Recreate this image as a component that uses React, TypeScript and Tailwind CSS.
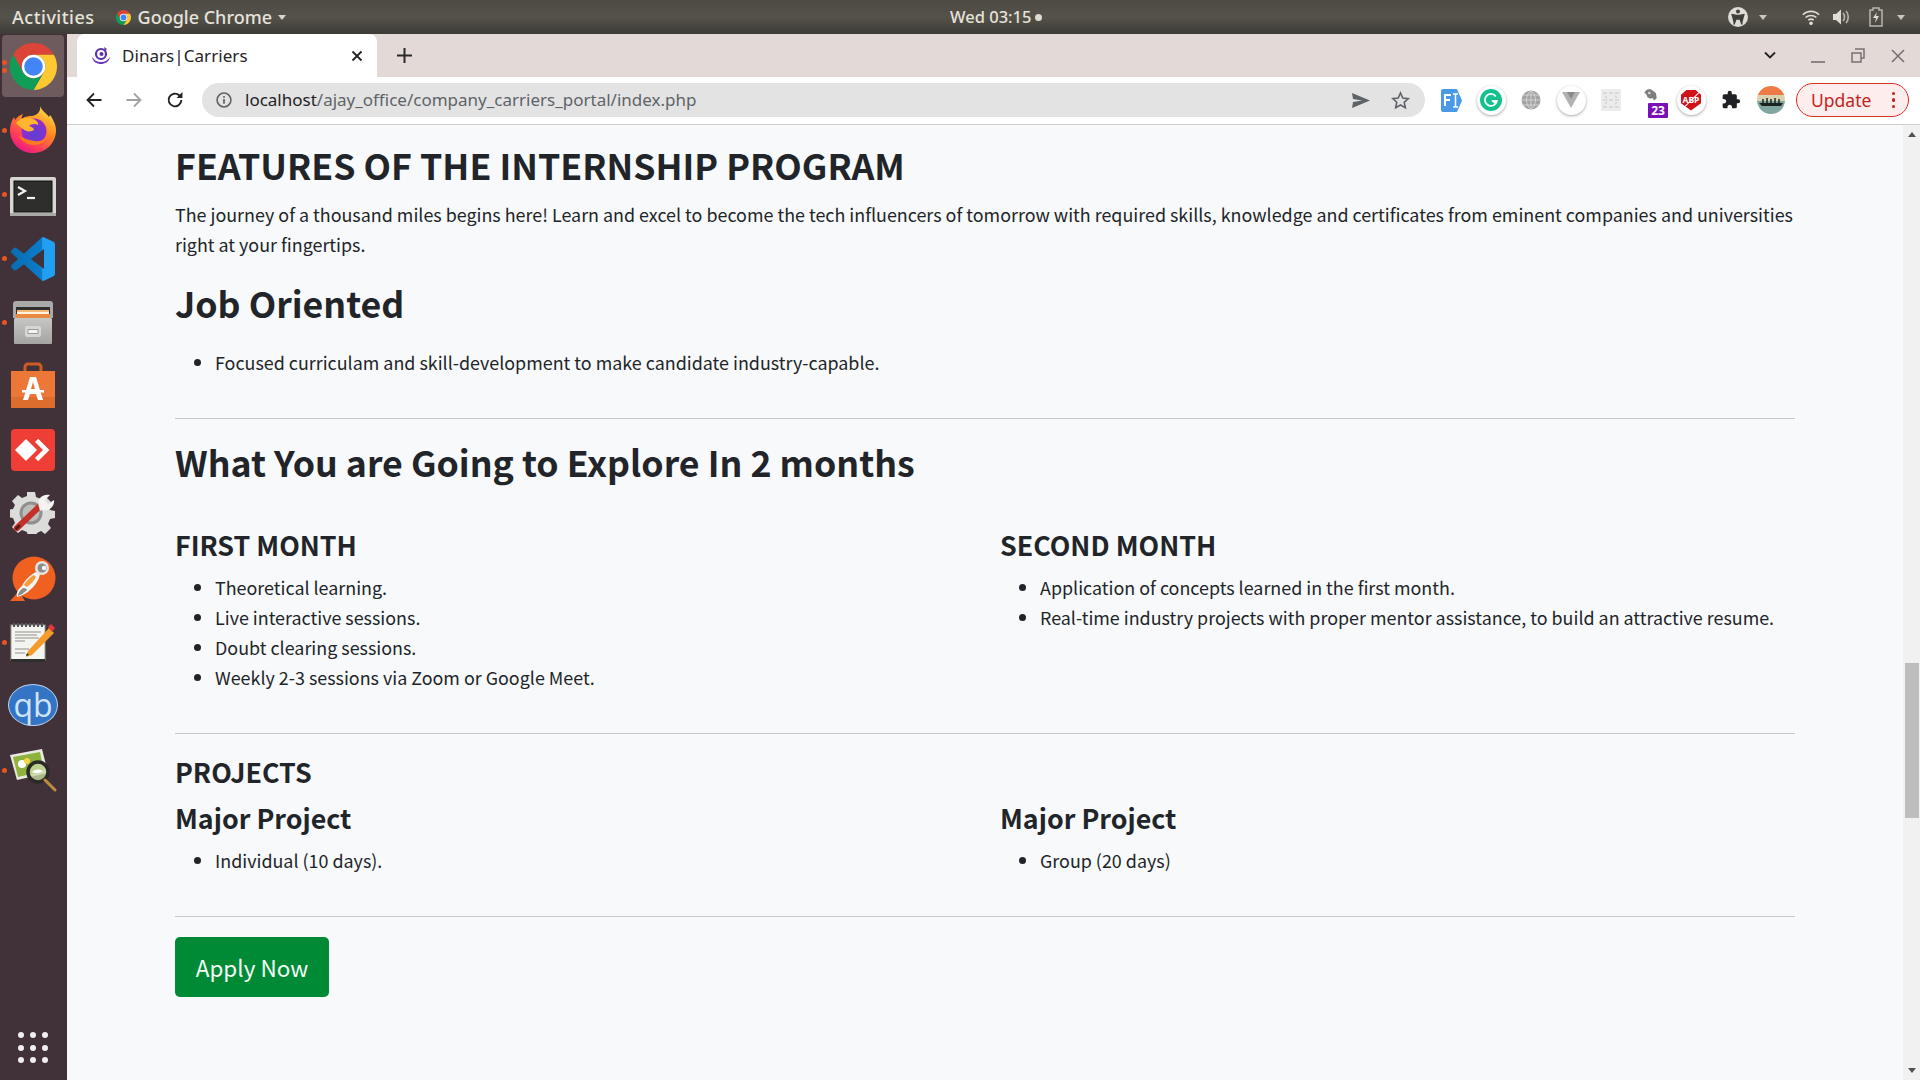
import React from "react";

const BODY = '"Noto Sans CJK SC","Source Sans Pro","Noto Sans",sans-serif';

function ChromeLogo({ size }: { size: number }) {
  return (
    <svg width={size} height={size} viewBox="0 0 48 48">
      <path fill="#db4437" d="M3.2 12A24 24 0 0 1 44.78 12H24A12 12 0 0 0 13.6 30Z" />
      <path fill="#fdc830" d="M44.78 12A24 24 0 0 1 24 48L34.4 30A12 12 0 0 0 24 12Z" />
      <path fill="#0f9d58" d="M24 48A24 24 0 0 1 3.2 12L13.6 30A12 12 0 0 0 34.4 30Z" />
      <circle cx="24" cy="24" r="12" fill="#fff" />
      <circle cx="24" cy="24" r="9.5" fill="#4285f4" />
    </svg>
  );
}

function Firefox() {
  return (
    <svg width="48" height="48" viewBox="0 0 48 48">
      <defs>
        <linearGradient id="ff1" x1="0.8" y1="0" x2="0.2" y2="1">
          <stop offset="0" stopColor="#ffe24a" />
          <stop offset="0.4" stopColor="#ff8a1f" />
          <stop offset="0.75" stopColor="#ff3a5c" />
          <stop offset="1" stopColor="#e3128c" />
        </linearGradient>
        <radialGradient id="ff2" cx="0.55" cy="0.65" r="0.6">
          <stop offset="0" stopColor="#5b3fd6" />
          <stop offset="1" stopColor="#9a2bc4" />
        </radialGradient>
      </defs>
      <path fill="url(#ff1)" d="M31 1c2 5 6 7 9 11l1-2c3 4 6 10 6 15 0 13-10 23-23 23S1 38 1 25c0-5 2-10 4-13l1 3c2-3 5-5 8-6-1 2-2 4-1 5 3-3 7-3 10-3 6-1 9-5 8-10z" />
      <circle cx="25" cy="26" r="12.5" fill="url(#ff2)" />
      <path fill="#ffb52e" d="M7 18c4-5 9-6 14-5 5 1 9 4 8 7-3-2-7-1-9 1 3 1 5 2 5 4-3 2-8 2-11-1-3-2-5-4-7-6z" />
      <path fill="#ff7a1f" d="M10 31c3 6 9 9 15 9 6 0 11-3 14-8-4 3-9 5-14 4-6-1-11-3-15-5z" />
    </svg>
  );
}

function Terminal() {
  return (
    <svg width="46" height="39" viewBox="0 0 46 39">
      <rect x="0" y="0" width="46" height="39" rx="2" fill="#d6d6d3" />
      <rect x="0" y="36" width="46" height="3" fill="#a9a9a6" />
      <rect x="4" y="4" width="38" height="31" fill="#2e2e2d" stroke="#0e0e0e" />
      <path d="M8 10l7 4-7 4" fill="none" stroke="#f2f2f2" strokeWidth="2.2" />
      <path d="M17 21h8" stroke="#f2f2f2" strokeWidth="2.2" />
    </svg>
  );
}

function VSCode() {
  return (
    <svg width="44" height="44" viewBox="0 0 24 24">
      <defs>
        <linearGradient id="vs" x1="0" x2="1" y1="0" y2="0">
          <stop offset="0" stopColor="#0a6cb0" />
          <stop offset="0.7" stopColor="#0a7ccc" />
          <stop offset="0.72" stopColor="#21a0f2" />
          <stop offset="1" stopColor="#21a0f2" />
        </linearGradient>
      </defs>
      <path fill="url(#vs)" d="M23.15 2.587L18.21.21a1.494 1.494 0 0 0-1.705.29l-9.46 8.63-4.12-3.128a.999.999 0 0 0-1.276.057L.327 7.261A1 1 0 0 0 .326 8.74L3.899 12 .326 15.26a1 1 0 0 0 .001 1.479L1.65 17.94a.999.999 0 0 0 1.276.057l4.12-3.128 9.46 8.63a1.492 1.492 0 0 0 1.704.29l4.942-2.377A1.5 1.5 0 0 0 24 20.06V3.939a1.5 1.5 0 0 0-.85-1.352zm-5.146 14.861L10.826 12l7.178-5.448v10.896z" />
    </svg>
  );
}

function Files() {
  return (
    <svg width="42" height="44" viewBox="0 0 42 44">
      <defs>
        <linearGradient id="fl" x1="0" x2="0" y1="0" y2="1">
          <stop offset="0" stopColor="#c6c6c4" />
          <stop offset="1" stopColor="#a4a4a2" />
        </linearGradient>
      </defs>
      <path fill="#a9a9a7" d="M1 4a3 3 0 0 1 3-3h34a3 3 0 0 1 3 3v14H1z" />
      <rect x="4" y="7" width="34" height="12" fill="#2f2f2e" />
      <rect x="5" y="10" width="32" height="2" fill="#f4b877" />
      <rect x="5" y="12" width="32" height="2" fill="#fff1dc" />
      <rect x="4" y="14" width="34" height="4" fill="#ea8a3e" />
      <path fill="url(#fl)" d="M3 18h36l1 1v24a1 1 0 0 1-1 1H3a1 1 0 0 1-1-1V19z" />
      <rect x="13" y="26" width="16" height="11" rx="2" fill="#d6d6d3" />
      <rect x="15.5" y="29" width="11" height="5" rx="1" fill="#9a9a98" />
      <rect x="16.5" y="30" width="9" height="3" fill="#f4f4f2" />
    </svg>
  );
}

function Store() {
  return (
    <svg width="44" height="46" viewBox="0 0 44 46">
      <path fill="none" stroke="#cf5b22" strokeWidth="3" d="M14 13V5a3 3 0 0 1 3-3h10a3 3 0 0 1 3 3v8" />
      <path fill="#ec7737" d="M0 9h44v37H0z" />
      <path fill="#dd6d2c" d="M0 35h44v11H0z" />
      <path fill="#fff" d="M19 15h6l7 23h-5l-2-6h-6l-2 6h-5zM22 20l-2 7h4z" />
      <rect x="11" y="28" width="22" height="2.5" fill="#fff" />
    </svg>
  );
}

function RedApp() {
  return (
    <svg width="46" height="46" viewBox="0 0 46 46">
      <rect x="1" y="2" width="44" height="42" rx="4" fill="#ef3e36" />
      <path fill="#fff" d="M16 12l11 11-11 11L5 23z" />
      <path fill="#fff" d="M27 15l8 8-8 8 3.2 3.2L41.4 23 30.2 11.8z" transform="translate(-2 0)" />
    </svg>
  );
}

function Settings() {
  return (
    <svg width="46" height="42" viewBox="0 0 46 42">
      <path fill="#dcdcda" d="M17 0h8l1 5 5 2 4-3 6 6-3 4 2 4 5 1v7l-5 1-2 5 3 4-6 6-4-3-4 2-1 4h-8l-1-5-5-2-4 3-6-6 3-4-2-5-5-1v-7l5-1 2-4-3-4 6-6 4 3 5-2z" />
      <circle cx="21" cy="21" r="11.5" fill="#8f8f8d" />
      <circle cx="21" cy="21" r="8.5" fill="#bdbdbb" />
      <path d="M7 36L32 12" stroke="#c4312a" strokeWidth="6" strokeLinecap="round" />
      <path d="M6.5 36.5L9 34" stroke="#5b1512" strokeWidth="3" strokeLinecap="round" />
      <path fill="#f3f3f1" d="M29 15c-3-7 3-14 11-12l-5 5 3 4 6-4c1 7-6 12-12 10l-2 1z" />
    </svg>
  );
}

function Postman() {
  return (
    <svg width="46" height="45" viewBox="0 0 46 45">
      <circle cx="24" cy="22" r="21.5" fill="#f0601f" />
      <path fill="#f0601f" d="M9 35L0 45h15z" />
      <path fill="#f4f4f2" d="M7 41c-1-4 1-8 5-11 3-6 8-11 14-14l4 2c-1 6-5 12-10 16-3 3-8 6-13 7z" />
      <path fill="#f59a3e" d="M14 29c2-4 6-8 10-10l2 2c-2 4-5 7-9 10z" />
      <path fill="#8c8c8a" d="M8 40c0-3 2-6 5-8 3 0 4 1 4 2-3 3-6 5-9 6z" />
      <circle cx="32" cy="12" r="7" fill="#e4e4e2" />
      <circle cx="32" cy="12" r="4.5" fill="#8c8c8a" />
      <circle cx="34" cy="12" r="2.2" fill="#f4f4f2" />
    </svg>
  );
}

function Notepad() {
  return (
    <svg width="46" height="40" viewBox="0 0 46 40">
      <rect x="1" y="3" width="34" height="35" fill="#f4f4f0" stroke="#9a9a96" />
      <rect x="1" y="37" width="34" height="3" fill="#2f2f2d" />
      <path d="M4 1v4M8 1v4M12 1v4M16 1v4M20 1v4M24 1v4M28 1v4M32 1v4" stroke="#555" strokeWidth="2" />
      <path d="M5 10h26M5 13h22M5 16h24M5 19h10M5 27h14M5 31h10" stroke="#8f8f8c" strokeWidth="1" />
      <path fill="#f59b2b" d="M18 29L39 6l5 5-22 22-6 2z" />
      <path fill="#e23a3a" d="M38 5l3-3 4 4-3 4z" />
      <path fill="#222" d="M17 31l-1 3 3-1z" />
    </svg>
  );
}

function Qb() {
  return (
    <div className="w-[50px] h-[42px] rounded-[50%] bg-[#3474c4] border border-[#b8d2f0] flex items-center justify-center text-[32px] leading-none text-[#cfe4fb] font-['Open_Sans',sans-serif]">
      qb
    </div>
  );
}

function Viewer() {
  return (
    <svg width="48" height="44" viewBox="0 0 48 44">
      <path fill="#e9eadf" d="M1 6L33 0l6 24-31 7z" />
      <path fill="#8fb23c" d="M4 8L31 3l4 19-26 6z" />
      <circle cx="13" cy="15" r="4" fill="#fff" />
      <circle cx="18" cy="12" r="3" fill="#f5d547" />
      <circle cx="29" cy="23" r="10" fill="#c5d7a0" fillOpacity="0.8" stroke="#2a2a28" strokeWidth="3.5" />
      <path d="M23 23c3-3 8-3 11-1-2 2-8 3-11 1z" fill="#fff" />
      <path d="M36 31l10 10" stroke="#c18a3f" strokeWidth="3" strokeLinecap="round" />
    </svg>
  );
}

const dock: { icon: React.ReactNode; dots: number; active?: boolean; nudge: string }[] = [
  { icon: <ChromeLogo size={47} />, dots: 2, active: true, nudge: "-translate-y-[1px]" },
  { icon: <Firefox />, dots: 1, nudge: "-translate-y-[2px]" },
  { icon: <Terminal />, dots: 1, nudge: "translate-y-[1px]" },
  { icon: <VSCode />, dots: 1, nudge: "" },
  { icon: <Files />, dots: 1, nudge: "-translate-y-[1px]" },
  { icon: <Store />, dots: 0, nudge: "-translate-y-[2px]" },
  { icon: <RedApp />, dots: 0, nudge: "-translate-y-[1px]" },
  { icon: <Settings />, dots: 0, nudge: "-translate-y-[2px]" },
  { icon: <Postman />, dots: 0, nudge: "-translate-y-[1px]" },
  { icon: <Notepad />, dots: 1, nudge: "-translate-y-[1px]" },
  { icon: <Qb />, dots: 0, nudge: "-translate-y-[2px]" },
  { icon: <Viewer />, dots: 1, nudge: "" },
];

function Dock() {
  return (
    <aside className="w-[67px] shrink-0 bg-[#41323a] flex flex-col pt-[1px] relative">
      {dock.map((d, i) => (
        <div key={i} className="h-[64px] shrink-0 flex items-center justify-center relative">
          {d.active && <div className="absolute left-[2px] top-0 w-[62px] h-[62px] rounded-[4px] bg-[#6e5b5d]" />}
          {d.dots > 0 && (
            <div className="absolute left-[2px] top-0 bottom-[2px] flex flex-col justify-center gap-[3px]">
              {Array.from({ length: d.dots }).map((_, k) => (
                <span key={k} className="block w-[5px] h-[5px] rounded-full bg-[#e95420]" />
              ))}
            </div>
          )}
          <div className={`relative flex items-center justify-center -ml-[1px] ${d.nudge}`}>{d.icon}</div>
        </div>
      ))}
      <div className="mt-auto mb-[17px] ml-[18px] grid grid-cols-3 gap-[6.5px] w-[30px]">
        {Array.from({ length: 9 }).map((_, i) => (
          <span key={i} className="block w-[6px] h-[6px] rounded-full bg-[#f0eeee]" />
        ))}
      </div>
    </aside>
  );
}

function Caret({ cls }: { cls: string }) {
  return <span className={`block w-0 h-0 border-l-[4.5px] border-r-[4.5px] border-t-[5px] border-l-transparent border-r-transparent ${cls}`} />;
}

function TopBar() {
  return (
    <header className="h-[34px] shrink-0 bg-gradient-to-b from-[#4c4a43] via-[#55524a] to-[#3c3b35] flex items-center text-[#e6e3dc] font-['Noto_Sans',sans-serif] font-medium text-[18px] relative">
      <span className="ml-[12px] tracking-[0.5px]">Activities</span>
      <span className="ml-[21px]"><ChromeLogo size={15} /></span>
      <span className="ml-[7px]">Google Chrome</span>
      <span className="ml-[6px]"><Caret cls="border-t-[#d8d5cf]" /></span>
      <div className="absolute left-[950px] top-0 h-full flex items-center gap-[4px] text-[16.5px]">
        <span>Wed 03:15</span>
        <span className="block w-[7px] h-[7px] rounded-full bg-[#dedbd5]" />
      </div>
      <div className="ml-auto flex items-center">
        <svg width="20" height="20" viewBox="0 0 20 20">
          <circle cx="10" cy="10" r="10" fill="#dfdcd6" />
          <circle cx="10" cy="4.6" r="2" fill="#3f3e38" />
          <path d="M3.5 7.5L8 8.4V12l-2 5.5M16.5 7.5L12 8.4V12l2 5.5M8 8.4h4V12H8z" fill="#3f3e38" stroke="#3f3e38" strokeWidth="1.4" />
        </svg>
        <span className="ml-[11px]"><Caret cls="border-t-[#c9c6c0]" /></span>
        <svg className="ml-[35px]" width="18" height="17" viewBox="0 0 20 18">
          <path d="M1 6c5-5 13-5 18 0M4 9c3.5-3 8.5-3 12 0M7 12c2-1.5 4-1.5 6 0" fill="none" stroke="#dfdcd6" strokeWidth="1.8" />
          <circle cx="10" cy="15.5" r="2" fill="#dfdcd6" />
        </svg>
        <svg className="ml-[12px]" width="19" height="18" viewBox="0 0 19 18">
          <path d="M1 6h3l5-4.5v15L4 12H1z" fill="#dfdcd6" />
          <path d="M11 5c2 2 2 6 0 8M14 3c3 3 3 9 0 12" fill="none" stroke="#b8b5af" strokeWidth="1.6" />
        </svg>
        <svg className="ml-[18px]" width="14" height="20" viewBox="0 0 14 20">
          <path d="M4 1h6v2h3v16H1V3h3z" fill="none" stroke="#b8b5af" strokeWidth="1.5" />
          <path d="M8 5L4 11h3l-1 5 4-7H7z" fill="#dfdcd6" />
        </svg>
        <span className="ml-[14px] mr-[15px]"><Caret cls="border-t-[#c9c6c0]" /></span>
      </div>
    </header>
  );
}

function Favicon() {
  return (
    <svg width="20" height="20" viewBox="0 0 20 20">
      <circle cx="10" cy="8" r="5" fill="none" stroke="#5b33a8" strokeWidth="2.2" />
      <circle cx="10.5" cy="8" r="2" fill="#5b33a8" />
      <path d="M1 11c1 5 5 7 9 7s8-2 9-7c-2 3-5 5-9 5s-7-2-9-5z" fill="#6a3ab8" />
      <path d="M13 1l3 2-2 2z" fill="#5b33a8" />
    </svg>
  );
}

function TabStrip() {
  return (
    <div className="h-[43px] shrink-0 bg-[#e3dad8] flex items-end pl-[10px] relative">
      <div className="w-[300px] h-[43px] bg-white rounded-t-[8px] flex items-center font-['Noto_Sans',sans-serif] text-[17px] text-[#1f2328]">
        <span className="ml-[14px] shrink-0"><Favicon /></span>
        <span className="ml-[11px] tracking-[0.05px]">Dinars|Carriers</span>
        <svg className="ml-auto mr-[14px]" width="12" height="12" viewBox="0 0 12 12">
          <path d="M1.5 1.5l9 9M10.5 1.5l-9 9" stroke="#222" strokeWidth="1.8" />
        </svg>
      </div>
      <svg className="ml-[20px] mb-[14px]" width="15" height="15" viewBox="0 0 15 15">
        <path d="M7.5 0v15M0 7.5h15" stroke="#2a2a2a" strokeWidth="2" />
      </svg>
      <div className="ml-auto flex items-center h-full">
        <svg width="14" height="9" viewBox="0 0 14 9">
          <path d="M2 1.5l5 5 5-5" fill="none" stroke="#222" strokeWidth="1.8" />
        </svg>
        <span className="block ml-[34px] mt-[12px] w-[14px] h-[2px] bg-[#8a8584]" />
        <svg className="ml-[26px]" width="14" height="15" viewBox="0 0 14 15">
          <path d="M4 1h9v9H10M1 5h9v9H1z" fill="none" stroke="#77716f" strokeWidth="1.5" />
        </svg>
        <svg className="ml-[26px] mr-[15px]" width="14" height="14" viewBox="0 0 14 14">
          <path d="M1 1l12 12M13 1L1 13" stroke="#77716f" strokeWidth="1.6" />
        </svg>
      </div>
    </div>
  );
}

function Ext({ children }: { children: React.ReactNode }) {
  return <div className="w-[40px] h-[40px] flex items-center justify-center relative">{children}</div>;
}

function Round({ children }: { children: React.ReactNode }) {
  return <div className="w-[29px] h-[29px] rounded-full bg-white shadow-[0_1px_3px_rgba(0,0,0,0.35)] flex items-center justify-center">{children}</div>;
}

function Toolbar() {
  return (
    <div className="h-[48px] shrink-0 bg-white border-b border-[#cfcfcf] flex items-center pb-[1px]">
      <svg className="ml-[19px]" width="16" height="16" viewBox="0 0 16 16">
        <path d="M15.5 8H1.5M8 1.5L1.5 8 8 14.5" fill="none" stroke="#222" strokeWidth="1.8" />
      </svg>
      <svg className="ml-[24px]" width="16" height="16" viewBox="0 0 16 16">
        <path d="M.5 8h14M8 1.5L14.5 8 8 14.5" fill="none" stroke="#a2a2a2" strokeWidth="1.8" />
      </svg>
      <svg className="ml-[24px]" width="18" height="18" viewBox="0 0 17 17">
        <path d="M14.5 8.5a6 6 0 1 1-1.8-4.3" fill="none" stroke="#222" strokeWidth="1.8" />
        <path d="M15.5 1v5.5H10z" fill="#222" />
      </svg>
      <div className="ml-[18px] w-[1223px] h-[34px] rounded-full bg-[#e3e3e3] flex items-center text-[#5f6368] font-['Noto_Sans',sans-serif] text-[17px]">
        <svg className="ml-[14px]" width="16" height="16" viewBox="0 0 15 15">
          <circle cx="7.5" cy="7.5" r="6.5" fill="none" stroke="#5f6368" strokeWidth="1.5" />
          <path d="M7.5 6.5v4.500M7.5 3.700v1.600" stroke="#5f6368" strokeWidth="1.6" />
        </svg>
        <span className="ml-[13px]"><span className="text-[#1f2124]">localhost</span>/ajay_office/company_carriers_portal/index.php</span>
        <svg className="ml-auto" width="18" height="15" viewBox="0 0 18 15">
          <path d="M0 0l18 7.5L0 15l1-6 9-1.500L1 6z" fill="#5f6368" />
        </svg>
        <svg className="ml-[21px] mr-[15px]" width="19" height="19" viewBox="0 0 24 24">
          <path d="M12 2.500l2.900 6.300 6.900.8-5.100 4.700 1.400 6.800L12 17.700 5.900 21l1.400-6.800L2.200 9.600l6.900-.8z" fill="none" stroke="#5f6368" strokeWidth="2" />
        </svg>
      </div>
      <div className="ml-[6px] flex items-center">
        <Ext>
          <svg width="21" height="23" viewBox="0 0 21 23">
            <path d="M2 0h14l5 11.500L16 23H2a2 2 0 0 1-2-2V2a2 2 0 0 1 2-2z" fill="#4a9ae8" />
            <path d="M4 17V6h6M4 11h5" fill="none" stroke="#fff" strokeWidth="2" />
            <path d="M12 5h5M12 18h5M14.500 5v13" fill="none" stroke="#fff" strokeWidth="1.5" />
          </svg>
        </Ext>
        <Ext>
          <Round>
            <svg width="22" height="22" viewBox="0 0 22 22">
              <circle cx="11" cy="11" r="11" fill="#12c18d" />
              <path d="M15.800 7.500A6 6 0 1 0 16.800 12h-5M13 12l2.800 3" fill="none" stroke="#fff" strokeWidth="1.8" />
            </svg>
          </Round>
        </Ext>
        <Ext>
          <svg width="20" height="20" viewBox="0 0 20 20">
            <circle cx="10" cy="10" r="9.5" fill="#a3a3a3" />
            <path d="M0.5 10h19M2 5h16M2 15h16M10 .5v19M10 .5c-6 5-6 14 0 19M10 .5c6 5 6 14 0 19" fill="none" stroke="#dcdcdc" strokeWidth="0.8" />
          </svg>
        </Ext>
        <Ext>
          <Round>
            <svg width="18" height="16" viewBox="0 0 18 16">
              <path d="M0 0h18L9 16z" fill="#b2b2b2" />
              <path d="M5 0h8L9 7z" fill="#8a8a8a" />
            </svg>
          </Round>
        </Ext>
        <Ext>
          <svg width="20" height="22" viewBox="0 0 20 22">
            <rect width="20" height="22" fill="#ececec" />
            <path d="M2 4h4M8 4h4M14 4h4M2 11h4M8 11h4M14 11h4M2 18h4M8 18h4M14 18h4M4 7l2 2M14 7l2 2M4 15l2-2M14 15l2-2" stroke="#d4d4d4" strokeWidth="1.5" />
          </svg>
        </Ext>
        <Ext>
          <svg className="absolute left-[10px] top-[8px]" width="19" height="15" viewBox="0 0 19 18">
            <path d="M4 3c2-2 6-2 8 0l4 3 1 6-3 3-2-3-3 1-3-2-2-4-2-1z" fill="#7e7e7e" />
            <circle cx="8" cy="6" r="1.5" fill="#ddd" />
          </svg>
          <div className="absolute left-[17px] top-[23px] w-[20px] h-[15px] rounded-[1px] bg-[#7a10b8] text-white text-[12px] leading-[15px] font-bold text-center font-['Noto_Sans',sans-serif]">23</div>
        </Ext>
        <Ext>
          <Round>
            <div className="relative w-[20px] h-[21px] bg-[#d0121b] [clip-path:polygon(30%_0,70%_0,100%_25%,100%_65%,50%_100%,0_65%,0_25%)] text-white text-[8.5px] font-bold flex items-center justify-center font-['Noto_Sans',sans-serif]">
              ABP
              <span className="absolute left-[9px] top-[-2px] h-[26px] w-[1px] bg-white rotate-45" />
            </div>
          </Round>
        </Ext>
        <Ext>
          <svg width="20" height="20" viewBox="0 0 24 24">
            <path d="M20.5 11H19V7a2 2 0 0 0-2-2h-4V3.5a2.5 2.5 0 0 0-5 0V5H4a2 2 0 0 0-2 2v3.8h1.5c1.5 0 2.7 1.2 2.7 2.7S5 16.200 3.5 16.200H2V20a2 2 0 0 0 2 2h3.800v-1.500c0-1.500 1.200-2.700 2.700-2.700s2.700 1.200 2.700 2.700V22H17a2 2 0 0 0 2-2v-4h1.500a2.500 2.500 0 0 0 0-5z" fill="#202124" />
          </svg>
        </Ext>
        <Ext>
          <svg width="28" height="28" viewBox="0 0 28 28">
            <defs>
              <clipPath id="av"><circle cx="14" cy="14" r="14" /></clipPath>
            </defs>
            <g clipPath="url(#av)">
              <rect width="28" height="9" fill="#ee7a45" />
              <rect y="9" width="28" height="6" fill="#d9d2b0" />
              <rect y="15" width="28" height="13" fill="#7fa7a0" />
              <path d="M2 17h24l-2 3H5z" fill="#1c2422" />
              <path d="M6 17v-4M10 17v-5M14 17v-4M18 17v-5M22 17v-4" stroke="#1c2422" strokeWidth="1.5" />
            </g>
          </svg>
        </Ext>
      </div>
      <div className="ml-[5px] w-[113px] h-[34px] rounded-full border border-[#d93025] bg-[#fdeeed] flex items-center text-[#c5221f] font-['Noto_Sans',sans-serif] text-[17.500px]">
        <span className="ml-[14px]">Update</span>
        <span className="ml-auto mr-[13px] flex flex-col gap-[3px]">
          <span className="block w-[3.5px] h-[3.5px] rounded-full bg-[#c5221f]" />
          <span className="block w-[3.5px] h-[3.5px] rounded-full bg-[#c5221f]" />
          <span className="block w-[3.5px] h-[3.5px] rounded-full bg-[#c5221f]" />
        </span>
      </div>
    </div>
  );
}

function Bullets({ items }: { items: string[] }) {
  return (
    <ul className="list-disc pl-[40px] text-[17.900px] leading-[30px]">
      {items.map((t) => (
        <li key={t}>{t}</li>
      ))}
    </ul>
  );
}

function Page() {
  return (
    <div className="flex-1 min-h-0 flex">
      <div className="flex-1 min-w-0 bg-[#f8f9fa] text-[#212529] pl-[108px] pr-[108px] pt-[16px]" style={{ fontFamily: BODY }}>
        <h1 className="text-[35.700px] leading-[48px] font-bold">FEATURES OF THE INTERNSHIP PROGRAM</h1>
        <p className="mt-[10px] text-[17.900px] leading-[30px]">
          The journey of a thousand miles begins here! Learn and excel to become the tech influencers of tomorrow with required skills, knowledge and certificates from eminent companies and universities right at your fingertips.
        </p>
        <h2 className="mt-[20px] text-[35.700px] leading-[48px] font-bold">Job Oriented</h2>
        <div className="mt-[20px]">
          <Bullets items={["Focused curriculam and skill-development to make candidate industry-capable."]} />
        </div>
        <hr className="mt-[41px] border-0 h-[1px] bg-[#c8c9cb]" />
        <h2 className="mt-[19px] text-[35.700px] leading-[48px] font-bold">What You are Going to Explore In 2 months</h2>
        <div className="mt-[41px] grid grid-cols-2 gap-x-[30px]">
          <div>
            <h3 className="text-[26.800px] leading-[36px] font-bold">FIRST MONTH</h3>
            <div className="mt-[9px]">
              <Bullets items={["Theoretical learning.", "Live interactive sessions.", "Doubt clearing sessions.", "Weekly 2-3 sessions via Zoom or Google Meet."]} />
            </div>
          </div>
          <div>
            <h3 className="text-[26.800px] leading-[36px] font-bold">SECOND MONTH</h3>
            <div className="mt-[9px]">
              <Bullets items={["Application of concepts learned in the first month.", "Real-time industry projects with proper mentor assistance, to build an attractive resume."]} />
            </div>
          </div>
        </div>
        <hr className="mt-[41px] border-0 h-[1px] bg-[#c8c9cb]" />
        <h3 className="mt-[20px] text-[26.800px] leading-[36px] font-bold">PROJECTS</h3>
        <div className="mt-[10px] grid grid-cols-2 gap-x-[30px]">
          <div>
            <h3 className="text-[26.800px] leading-[36px] font-bold">Major Project</h3>
            <div className="mt-[9px]"><Bullets items={["Individual (10 days)."]} /></div>
          </div>
          <div>
            <h3 className="text-[26.800px] leading-[36px] font-bold">Major Project</h3>
            <div className="mt-[9px]"><Bullets items={["Group (20 days)"]} /></div>
          </div>
        </div>
        <hr className="mt-[41px] border-0 h-[1px] bg-[#c8c9cb]" />
        <button className="mt-[20px] block w-[154px] h-[60px] pb-[1px] rounded-[5px] bg-[#008a35] text-[#f4fff6] text-[22.500px] leading-[36px]">Apply Now</button>
      </div>
      <div className="w-[17px] shrink-0 bg-[#f1f1f1] flex flex-col items-center relative">
        <span className="block mt-[7px] w-0 h-0 border-l-[4.5px] border-r-[4.5px] border-b-[5px] border-l-transparent border-r-transparent border-b-[#505050]" />
        <div className="mt-[526px] ml-[1px] w-[14px] h-[155px] bg-[#bdbdbd]" />
        <span className="block mt-auto mb-[7px] w-0 h-0 border-l-[4.5px] border-r-[4.5px] border-t-[5px] border-l-transparent border-r-transparent border-t-[#505050]" />
      </div>
    </div>
  );
}

export default function App() {
  return (
    <div className="w-[1920px] h-[1080px] overflow-hidden flex flex-col">
      <TopBar />
      <div className="flex-1 min-h-0 flex">
        <Dock />
        <main className="flex-1 min-w-0 flex flex-col">
          <TabStrip />
          <Toolbar />
          <Page />
        </main>
      </div>
    </div>
  );
}
